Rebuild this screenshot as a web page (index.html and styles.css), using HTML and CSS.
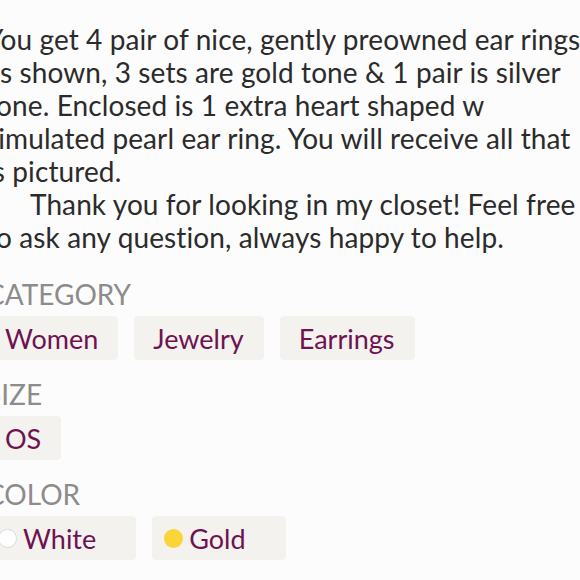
FILE: index.html
```html
<!DOCTYPE html>
<html>
<head>
<meta charset="utf-8">
<link rel="stylesheet" href="styles.css">
</head>
<body>
<div class="page">
  <p class="desc">You get 4 pair of nice, gently preowned ear rings<br>as shown, 3 sets are gold tone &amp; 1 pair is silver<br>tone. Enclosed is 1 extra heart shaped w<br>simulated pearl ear ring. You will receive all that<br>is pictured.</p>
  <p class="desc indent">Thank you for looking in my closet! Feel free<br>to ask any question, always happy to help.</p>

  <section class="group">
    <h2 class="label">CATEGORY</h2>
    <div class="chips">
      <span class="chip">Women</span>
      <span class="chip">Jewelry</span>
      <span class="chip">Earrings</span>
    </div>
  </section>

  <section class="group">
    <h2 class="label">SIZE</h2>
    <div class="chips">
      <span class="chip">OS</span>
    </div>
  </section>

  <section class="group">
    <h2 class="label">COLOR</h2>
    <div class="chips">
      <span class="chip chip-color"><span class="dot dot-white"></span>White</span>
      <span class="chip chip-color"><span class="dot dot-gold"></span>Gold</span>
    </div>
  </section>
</div>
</body>
</html>
```
FILE: styles.css
```css
html, body {
  margin: 0;
  padding: 0;
  background: #fdfcfc;
  overflow: hidden;
}
.page {
  margin-left: -14px;
  padding-top: 23px;
  font-family: "Lato", "Noto Sans", sans-serif;
  width: 640px;
}
.desc {
  margin: 0;
  font-size: 28px;
  letter-spacing: 0.1px;
  line-height: 33px;
  color: #2b2b2b;
  white-space: nowrap;
}
.indent {
  text-indent: 44px;
}
.label {
  margin: 0;
  font-size: 28px;
  font-weight: 400;
  color: #8d8b8b;
  line-height: 28px;
}
.desc + .group {
  margin-top: 26px;
}
.chips {
  display: flex;
  gap: 16px;
  margin-top: 8px;
  margin-bottom: 20px;
}
.chip {
  display: flex;
  align-items: center;
  height: 44px;
  padding: 0 20px 0 19px;
  background: #f4f2ef;
  border-radius: 4px;
  color: #6e1350;
  font-size: 27px;
}
.chip-color {
  padding: 0 40px 0 12px;
}
.dot {
  width: 19px;
  height: 19px;
  border-radius: 50%;
  margin-right: 6px;
  box-sizing: border-box;
  flex: none;
}
.dot-white {
  background: #ffffff;
  border: 1px solid #dddbd8;
}
.dot-gold {
  background: #fbd437;
}
```
